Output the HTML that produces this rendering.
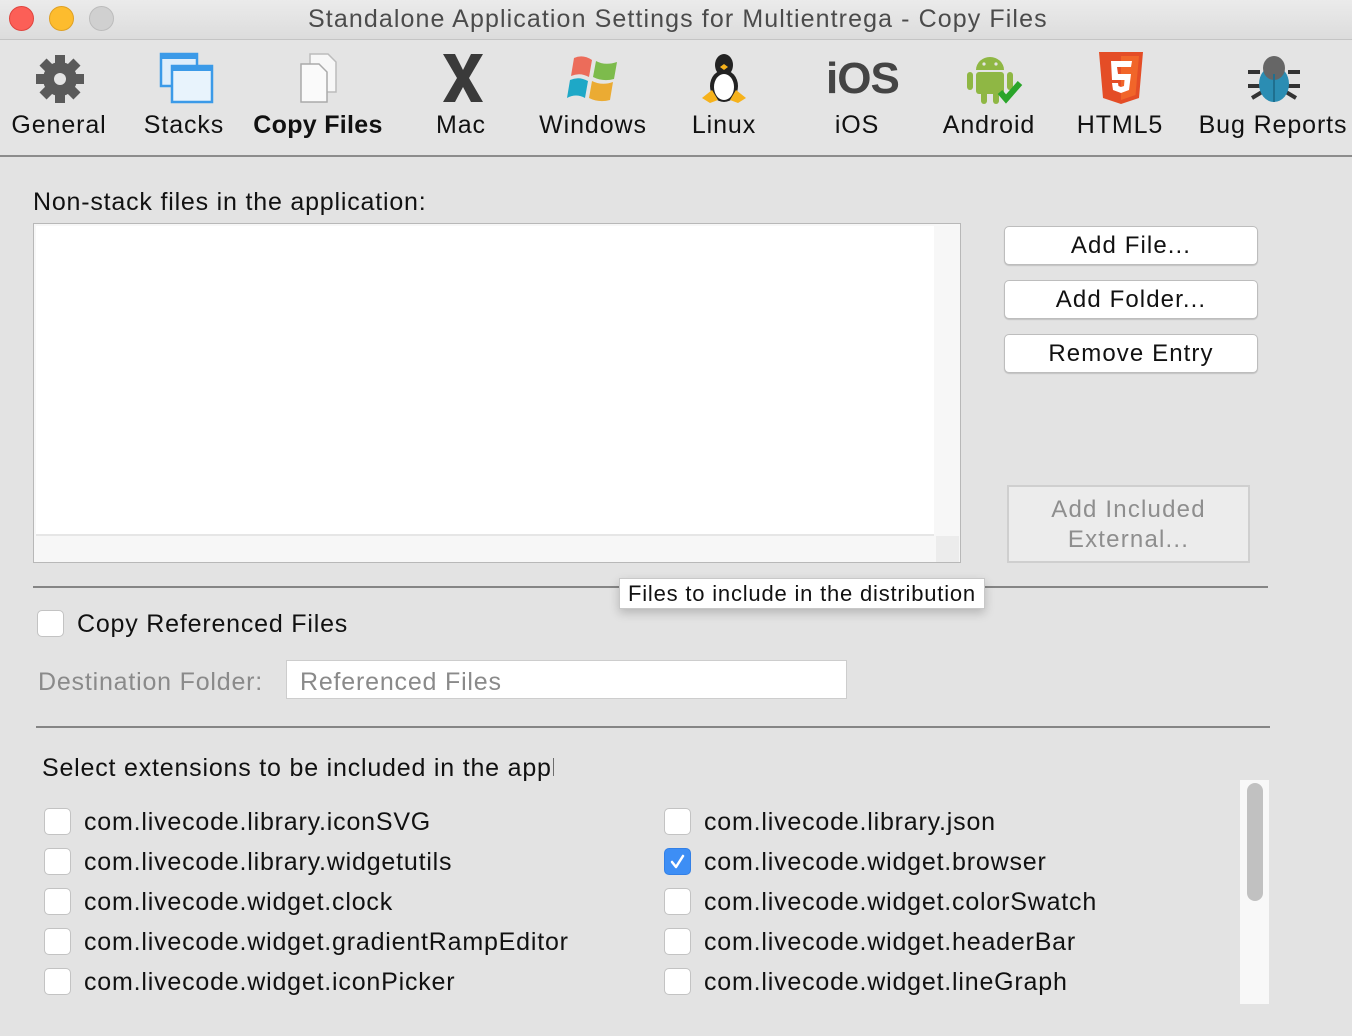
<!DOCTYPE html>
<html><head><meta charset="utf-8"><style>
*{margin:0;padding:0;box-sizing:border-box}
body{width:1352px;height:1036px;background:#e3e3e3;font-family:"Liberation Sans",sans-serif;position:relative;overflow:hidden;color:#111}
.a{position:absolute}
.title{top:0;left:0;width:1352px;height:40px;background:linear-gradient(#ebebeb,#dcdcdc);border-bottom:1px solid #c4c4c4}
.dot{top:6px;width:25px;height:25px;border-radius:50%}
.tb{top:40px;left:0;width:1352px;height:117px;background:#e4e4e4;border-bottom:2px solid #8c8c8c}
.lbl{top:111px;font-size:25px;text-align:center;width:180px;margin-left:-90px;letter-spacing:0.9px}
.ic{top:52px}
.btn{left:1004px;width:254px;height:39px;background:#fff;border:1px solid #bdbdbd;border-radius:5px;font-size:24px;text-align:center;line-height:37px;box-shadow:0 1px 1px rgba(0,0,0,.15);letter-spacing:1.1px}
.cb{width:27px;height:27px;background:#fff;border:1px solid #c3c3c3;border-radius:5px}
.t{font-size:25px;white-space:nowrap;letter-spacing:0.8px}
</style></head><body>
<div class="a title"></div>
<div class="a dot" style="left:9px;background:#fc5f57;border:1px solid #e0443e"></div>
<div class="a dot" style="left:49px;background:#fdbc2e;border:1px solid #dfa023"></div>
<div class="a dot" style="left:89px;background:#d0d0d0;border:1px solid #bcbcbc"></div>
<div class="a t" style="top:5px;left:308px;font-size:25px;color:#4b4b4b;letter-spacing:1.1px">Standalone Application Settings for Multientrega - Copy Files</div>
<div class="a tb"></div>

<svg class="a ic" style="left:34px" width="52" height="52" viewBox="0 0 52 52"><g fill="#5a5a5a"><circle cx="26" cy="27" r="17"/><rect x="21" y="3" width="10" height="48"/><rect x="2" y="22" width="48" height="10"/><rect x="21" y="3" width="10" height="48" transform="rotate(45 26 27)"/><rect x="21" y="3" width="10" height="48" transform="rotate(-45 26 27)"/></g><circle cx="26" cy="27" r="6" fill="#e4e4e4"/></svg>
<svg class="a ic" style="left:158px" width="58" height="52" viewBox="0 0 58 52"><rect x="3" y="2" width="36" height="32" fill="#dfeefb" stroke="#3b9ae8" stroke-width="2.5"/><rect x="3" y="2" width="36" height="5" fill="#3b9ae8"/><rect x="14" y="14" width="40" height="36" fill="#e8f3fc" stroke="#3b9ae8" stroke-width="2.5"/><rect x="14" y="14" width="40" height="5" fill="#3b9ae8"/></svg>
<svg class="a ic" style="left:298px" width="44" height="52" viewBox="0 0 44 52"><path d="M12 2h18l8 8v30H12z" fill="#f7f7f7" stroke="#bbb" stroke-width="1.5"/><path d="M3 12h18l8 8v30H3z" fill="#fafafa" stroke="#aaa" stroke-width="1.5"/></svg>
<svg class="a ic" style="left:440px" width="46" height="52" viewBox="0 0 46 52"><path d="M3 2h12l8 16 8-16h12L29 26l14 24H31l-8-15-8 15H3l14-24z" fill="#3a3a3a"/></svg>
<svg class="a ic" style="left:566px" width="58" height="52" viewBox="0 0 58 52"><path d="M8 6q9-4 18 2l-3 17q-9-5-18-1z" fill="#ec6c5a"/><path d="M30 9q9 5 21 1l-3 17q-11 3-21-2z" fill="#7dbb4c"/><path d="M4 28q9-4 18 1l-3 17q-9-5-18 0z" fill="#1ea8c7"/><path d="M26 29q10 5 21 1l-3 18q-11 3-21-2z" fill="#ebab33"/></svg>
<svg class="a ic" style="left:700px" width="48" height="52" viewBox="0 0 48 52"><ellipse cx="24" cy="34" rx="14" ry="16" fill="#222"/><ellipse cx="24" cy="13" rx="9" ry="11" fill="#222"/><ellipse cx="24" cy="35" rx="10" ry="13" fill="#fff"/><path d="M20 15l4-3 4 3-4 3z" fill="#f6b21b"/><path d="M2 46l10-8 6 10-8 3zM46 46l-10-8-6 10 8 3z" fill="#f6b21b"/></svg>
<div class="a" style="top:54px;left:826px;font-size:44px;font-weight:bold;color:#444;letter-spacing:-1px">iOS</div>
<svg class="a ic" style="left:962px" width="64" height="54" viewBox="0 0 64 54"><path d="M14 18a14 13 0 0 1 28 0z" fill="#8fb744"/><rect x="14" y="20" width="28" height="22" rx="3" fill="#8fb744"/><rect x="5" y="20" width="6" height="18" rx="3" fill="#8fb744"/><rect x="45" y="20" width="6" height="18" rx="3" fill="#8fb744"/><rect x="19" y="38" width="6" height="14" rx="3" fill="#8fb744"/><rect x="31" y="38" width="6" height="14" rx="3" fill="#8fb744"/><circle cx="22" cy="12" r="1.6" fill="#e4e4e4"/><circle cx="34" cy="12" r="1.6" fill="#e4e4e4"/><path d="M38 40l6 7 14-16" fill="none" stroke="#2aa52a" stroke-width="6"/></svg>
<svg class="a ic" style="left:1097px" width="48" height="54" viewBox="0 0 48 54"><path d="M2 0h44l-4 46-18 6-18-6z" fill="#e44d26"/><path d="M24 4h18l-3.5 39L24 48z" fill="#f16529"/><path d="M14 9h21l-1 6H20l1 7h13l-2 16-8 3-8-3-1-7h6l.5 3 2.5 1 3-1 .5-6H15z" fill="#fff"/></svg>
<svg class="a ic" style="left:1246px" width="56" height="52" viewBox="0 0 56 52"><g stroke="#333" stroke-width="4"><path d="M2 20h12M42 20h12M2 34h12M42 34h12M6 46l10-6M50 46l-10-6"/></g><ellipse cx="28" cy="32" rx="15" ry="18" fill="#2b8db3"/><ellipse cx="28" cy="16" rx="11" ry="12" fill="#666"/><path d="M28 22v28" stroke="#1f6f8f" stroke-width="2"/></svg>

<div class="a lbl" style="left:59px">General</div>
<div class="a lbl" style="left:184px">Stacks</div>
<div class="a lbl" style="left:318px;font-weight:bold;letter-spacing:0.3px">Copy Files</div>
<div class="a lbl" style="left:461px">Mac</div>
<div class="a lbl" style="left:593px">Windows</div>
<div class="a lbl" style="left:724px">Linux</div>
<div class="a lbl" style="left:857px">iOS</div>
<div class="a lbl" style="left:989px">Android</div>
<div class="a lbl" style="left:1120px">HTML5</div>
<div class="a lbl" style="left:1273px">Bug Reports</div>

<div class="a t" style="top:188px;left:33px">Non-stack files in the application:</div>
<div class="a" style="left:33px;top:223px;width:928px;height:340px;border:1px solid #b8b8b8;background:#f7f7f7"></div>
<div class="a" style="left:36px;top:226px;width:898px;height:310px;background:#fff;border-bottom:2px solid #e6e6e6"></div>
<div class="a" style="left:936px;top:536px;width:23px;height:26px;background:#ececec"></div>

<div class="a btn" style="top:226px">Add File...</div>
<div class="a btn" style="top:280px">Add Folder...</div>
<div class="a btn" style="top:334px">Remove Entry</div>
<div class="a" style="left:1007px;top:485px;width:243px;height:78px;border:2px solid #cfcfcf;background:#ececec;color:#8e8e8e;font-size:24px;text-align:center;line-height:30px;padding-top:8px;letter-spacing:1.2px">Add Included<br>External...</div>

<div class="a" style="left:33px;top:586px;width:1235px;height:2px;background:#858585"></div>
<div class="a cb" style="left:37px;top:610px"></div>
<div class="a t" style="top:610px;left:77px">Copy Referenced Files</div>
<div class="a t" style="top:668px;left:38px;color:#8a8a8a">Destination Folder:</div>
<div class="a" style="left:286px;top:660px;width:561px;height:39px;background:#fff;border:1px solid #cdcdcd"></div>
<div class="a t" style="top:668px;left:300px;color:#8a8a8a">Referenced Files</div>

<div class="a" style="left:619px;top:578px;width:366px;height:31px;background:#fff;border:1px solid #c8c8c8;box-shadow:0 4px 10px rgba(0,0,0,.2);font-size:22px;line-height:30px;padding-left:8px;letter-spacing:0.8px;white-space:nowrap">Files to include in the distribution</div>

<div class="a" style="left:36px;top:726px;width:1234px;height:2px;background:#858585"></div>
<div class="a t" style="top:754px;left:42px;width:512px;overflow:hidden">Select extensions to be included in the application</div>

<div class="a" style="left:1240px;top:780px;width:29px;height:224px;background:#f8f8f8"></div>
<div class="a" style="left:1247px;top:783px;width:16px;height:118px;background:#c1c1c1;border-radius:8px"></div>

<div class="a cb" style="left:44px;top:808px"></div><div class="a t" style="left:84px;top:808px">com.livecode.library.iconSVG</div>
<div class="a cb" style="left:44px;top:848px"></div><div class="a t" style="left:84px;top:848px">com.livecode.library.widgetutils</div>
<div class="a cb" style="left:44px;top:888px"></div><div class="a t" style="left:84px;top:888px">com.livecode.widget.clock</div>
<div class="a cb" style="left:44px;top:928px"></div><div class="a t" style="left:84px;top:928px">com.livecode.widget.gradientRampEditor</div>
<div class="a cb" style="left:44px;top:968px"></div><div class="a t" style="left:84px;top:968px">com.livecode.widget.iconPicker</div>

<div class="a cb" style="left:664px;top:808px"></div><div class="a t" style="left:704px;top:808px">com.livecode.library.json</div>
<div class="a cb" style="left:664px;top:848px;background:#3d8ef5;border-color:#3380e6"></div>
<svg class="a" style="left:664px;top:848px" width="27" height="27" viewBox="0 0 27 27"><path d="M8 14l4 5 7-11" fill="none" stroke="#fff" stroke-width="2.5" stroke-linecap="round" stroke-linejoin="round"/></svg>
<div class="a t" style="left:704px;top:848px">com.livecode.widget.browser</div>
<div class="a cb" style="left:664px;top:888px"></div><div class="a t" style="left:704px;top:888px">com.livecode.widget.colorSwatch</div>
<div class="a cb" style="left:664px;top:928px"></div><div class="a t" style="left:704px;top:928px">com.livecode.widget.headerBar</div>
<div class="a cb" style="left:664px;top:968px"></div><div class="a t" style="left:704px;top:968px">com.livecode.widget.lineGraph</div>
</body></html>
